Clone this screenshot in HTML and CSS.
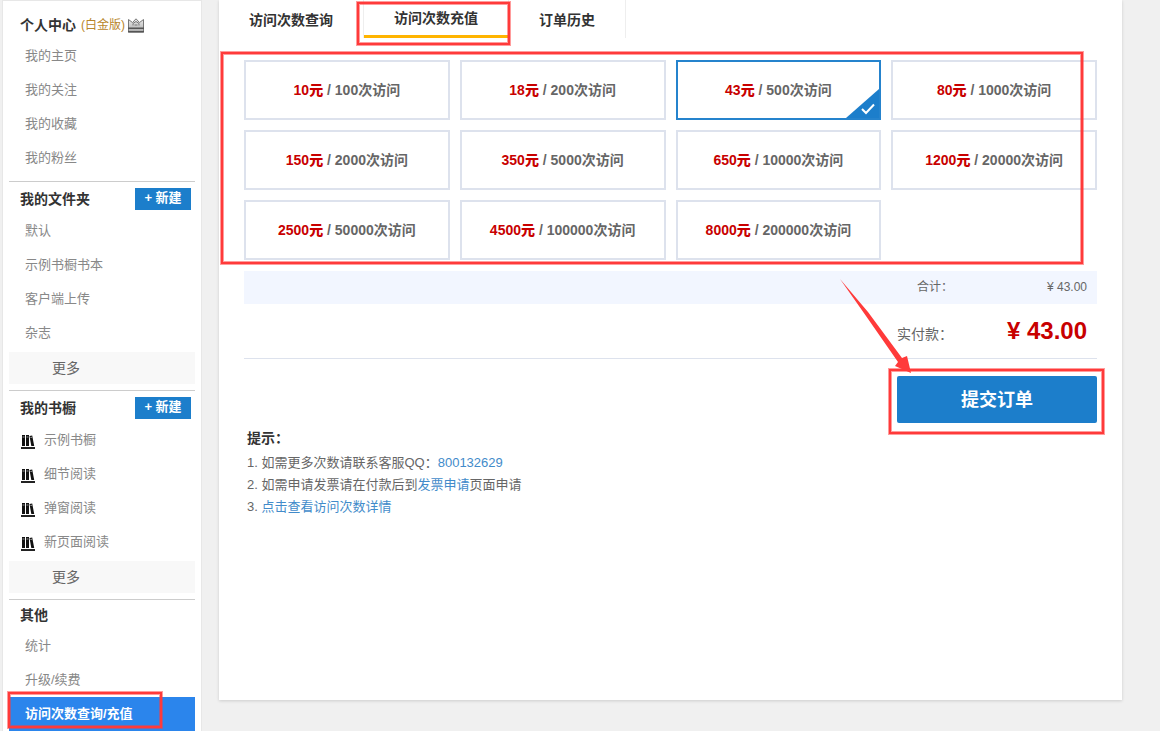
FILE: index.html
```html
<!DOCTYPE html>
<html lang="zh-CN">
<head>
<meta charset="utf-8">
<title>访问次数充值</title>
<link rel="stylesheet" href="styles.css">
</head>
<body>
<svg class="defs" aria-hidden="true">
  <symbol id="books" viewBox="0 0 14 14">
    <path fill="#111" d="M1 0h3v11H1zM5 0h3v11H5zM8.500 1l2.700-.6L13.200 11h-2.900z"/>
    <path fill="#999" d="M1.500 1.500h2v1h-2zM5.500 1.500h2v1h-2zM9.300 2l1.800-.3.200 1-1.800.3z"/>
    <path fill="#222" d="M0 12h14v2H0z"/>
  </symbol>
</svg>
<div class="page">
  <nav class="sidebar" aria-label="个人中心">
    <section class="group">
      <header class="group-head group-head-tall">
        <h2>个人中心</h2>
        <span class="plan">(白金版)</span>
        <svg class="crown" viewBox="0 0 16 15" aria-hidden="true">
          <defs><linearGradient id="silver" x1="0" y1="0" x2="0" y2="1"><stop offset="0" stop-color="#eee"/><stop offset="1" stop-color="#aaa"/></linearGradient></defs>
          <path d="M.5 1.500 4.500 4.500 8 .8l3.500 3.700 4-3V14H.5z" fill="url(#silver)" stroke="#777"/>
          <path d="M5 7.500V5.500L8 3.500l3 2v2M6.500 7h3" fill="none" stroke="#777"/>
          <path d="M0 9.500h16v1.500H0zM0 13h16v1.500H0z" fill="#555"/>
        </svg>
      </header>
      <ul>
        <li><a href="#">我的主页</a></li>
        <li><a href="#">我的关注</a></li>
        <li><a href="#">我的收藏</a></li>
        <li><a href="#">我的粉丝</a></li>
      </ul>
    </section>
    <section class="group">
      <header class="group-head">
        <h2>我的文件夹</h2>
        <button class="new" type="button">+ 新建</button>
      </header>
      <ul>
        <li><a href="#">默认</a></li>
        <li><a href="#">示例书橱书本</a></li>
        <li><a href="#">客户端上传</a></li>
        <li><a href="#">杂志</a></li>
      </ul>
      <a class="more" href="#">更多</a>
    </section>
    <section class="group">
      <header class="group-head">
        <h2>我的书橱</h2>
        <button class="new" type="button">+ 新建</button>
      </header>
      <ul class="shelves">
        <li><a href="#"><svg class="books"><use href="#books"/></svg>示例书橱</a></li>
        <li><a href="#"><svg class="books"><use href="#books"/></svg>细节阅读</a></li>
        <li><a href="#"><svg class="books"><use href="#books"/></svg>弹窗阅读</a></li>
        <li><a href="#"><svg class="books"><use href="#books"/></svg>新页面阅读</a></li>
      </ul>
      <a class="more" href="#">更多</a>
    </section>
    <section class="group">
      <header class="group-head group-head-short"><h2>其他</h2></header>
      <ul>
        <li><a href="#">统计</a></li>
        <li><a href="#">升级/续费</a></li>
        <li class="current"><a href="#" aria-current="page">访问次数查询/充值</a><span class="mark mark-nav"></span></li>
      </ul>
    </section>
  </nav>

  <main class="card">
    <nav class="tabs" aria-label="访问次数">
      <a class="tab" href="#">访问次数查询</a>
      <a class="tab tab-active" href="#" aria-current="page">访问次数充值<span class="mark mark-tab"></span></a>
      <a class="tab" href="#">订单历史</a>
    </nav>
    <form class="order">
      <div class="plans">
        <label class="option"><input type="radio" name="plan"><span><b>10元</b> / 100次访问</span></label>
        <label class="option"><input type="radio" name="plan"><span><b>18元</b> / 200次访问</span></label>
        <label class="option option-picked"><input type="radio" name="plan" checked><span><b>43元</b> / 500次访问</span>
          <svg class="tick" viewBox="0 0 33 29" aria-hidden="true"><path d="M33 0v29H0z" fill="#1c7ecb"/><path d="m16 20 4 4 8-8.500" fill="none" stroke="#fff" stroke-width="2"/></svg>
        </label>
        <label class="option"><input type="radio" name="plan"><span><b>80元</b> / 1000次访问</span></label>
        <label class="option"><input type="radio" name="plan"><span><b>150元</b> / 2000次访问</span></label>
        <label class="option"><input type="radio" name="plan"><span><b>350元</b> / 5000次访问</span></label>
        <label class="option"><input type="radio" name="plan"><span><b>650元</b> / 10000次访问</span></label>
        <label class="option"><input type="radio" name="plan"><span><b>1200元</b> / 20000次访问</span></label>
        <label class="option"><input type="radio" name="plan"><span><b>2500元</b> / 50000次访问</span></label>
        <label class="option"><input type="radio" name="plan"><span><b>4500元</b> / 100000次访问</span></label>
        <label class="option"><input type="radio" name="plan"><span><b>8000元</b> / 200000次访问</span></label>
        <span class="mark mark-plans"></span>
      </div>
      <div class="subtotal"><span>合计：</span><span class="amount">¥ 43.00</span></div>
      <div class="due"><span>实付款：</span><strong class="amount">¥ 43.00</strong></div>
      <div class="submit-row">
        <div class="submit-box">
          <button class="submit" type="submit">提交订单</button>
          <span class="mark mark-submit"></span>
          <svg class="arrow" viewBox="0 0 72 95" aria-hidden="true"><path d="M0 0 28 33 62 79l5-2 4 17-16-7 3-4L26 37z" fill="#ff3a3a"/></svg>
        </div>
      </div>
    </form>
    <section class="tips">
      <h3>提示：</h3>
      <ol>
        <li>如需更多次数请联系客服QQ：<a href="#">800132629</a></li>
        <li>如需申请发票请在付款后到<a href="#">发票申请</a>页面申请</li>
        <li><a href="#">点击查看访问次数详情</a></li>
      </ol>
    </section>
  </main>
</div>
</body>
</html>
```
FILE: styles.css
```css
* { box-sizing: border-box; }
html { background: #f0f0f0; }
body {
  margin: 0;
  color: #666;
  font: 13px/22px "Liberation Sans", "Noto Sans CJK SC", sans-serif;
}
h2, h3, ul, ol { margin: 0; padding: 0; }
ul, ol { list-style: none; }
a { color: inherit; text-decoration: none; }
button { border: 0; font-family: inherit; cursor: pointer; }
.defs { position: absolute; width: 0; height: 0; }

.page {
  display: flex;
  align-items: flex-start;
  gap: 17px;
  padding: 0 38px 0 2px;
}

/* Sidebar */
.sidebar {
  flex: none;
  width: 200px;
  padding: 0 6px;
  background: #fff;
  border: 1px solid #e7e7e7;
  border-bottom: 0;
}
.group + .group { margin-top: 6px; border-top: 1px solid #ccc; }
.group-head {
  display: flex;
  align-items: flex-start;
  height: 32px;
  padding: 6px 4px 0 11px;
}
.group-head h2 { color: #333; font-size: 14px; line-height: 22px; }
.group-head-tall { height: 38px; padding-top: 13px; }
.group-head-short { height: 29px; padding-top: 4px; }
.plan { margin-left: 5px; color: #b8862b; font-size: 12px; }
.crown { width: 16px; height: 15px; margin: 4px 0 0 3px; }
.new {
  width: 56px;
  height: 22px;
  margin-left: auto;
  padding: 0 0 2px;
  background: #1c7ecb;
  color: #fff;
  font-size: 13px;
  font-weight: 700;
  line-height: 20px;
}
.group li { position: relative; }
.group li a {
  display: flex;
  align-items: center;
  height: 34px;
  padding-left: 16px;
  color: #888;
}
.group .shelves a { padding-left: 12px; gap: 9px; }
.books { width: 14px; height: 14px; margin-top: 4px; }
.more {
  display: block;
  margin-top: 2px;
  padding-left: 43px;
  background: #f8f8f8;
  font-size: 14px;
  line-height: 32px;
}
.group .current a { background: #2b85ec; color: #fff; font-weight: 700; }

/* Main card */
.card {
  flex: 1;
  min-width: 0;
  padding-bottom: 182px;
  background: #fff;
  box-shadow: 0 1px 3px rgba(0, 0, 0, .15);
}
.tabs { display: flex; height: 38px; }
.tab {
  position: relative;
  padding: 0 30px;
  border-right: 1px solid #eee;
  color: #333;
  font-size: 14px;
  font-weight: 700;
  line-height: 40px;
}
.tab-active { border-bottom: 3px solid #ffb400; line-height: 36px; }
.order { padding: 22px 25px 0; }
.plans {
  position: relative;
  display: grid;
  grid-template-columns: repeat(4, 1fr);
  gap: 10px;
}
.option {
  position: relative;
  display: flex;
  align-items: center;
  justify-content: center;
  height: 60px;
  border: 2px solid #dde2ed;
  font-size: 14px;
  font-weight: 700;
}
.option input { position: absolute; opacity: 0; margin: 0; }
.option b { color: #c80000; }
.option-picked { border-color: #2583cd; }
.tick { position: absolute; right: 0; bottom: 0; width: 33px; height: 29px; }
.subtotal, .due { display: flex; justify-content: flex-end; padding-right: 10px; }
.amount { width: 134px; text-align: right; }
.subtotal {
  margin-top: 11px;
  background: #f2f6ff;
  font-size: 12px;
  line-height: 33px;
}
.due {
  align-items: center;
  height: 55px;
  border-bottom: 1px solid #dde2ed;
  font-size: 14px;
}
.due span { padding-top: 6px; }
.due .amount { color: #c80000; font-size: 24px; }
.submit-row { display: flex; justify-content: flex-end; margin-top: 17px; }
.submit-box { position: relative; width: 200px; }
.submit {
  display: block;
  width: 100%;
  height: 47px;
  padding: 0 0 4px;
  border-radius: 2px;
  background: #1c7ecb;
  color: #fff;
  font-size: 18px;
  font-weight: 700;
}
.tips { padding: 4px 28px 0; }
.tips h3 { color: #333; font-size: 14px; line-height: 22px; margin-bottom: 3px; }
.tips ol { counter-reset: tip; }
.tips li { counter-increment: tip; }
.tips li::before { content: counter(tip) ". "; }
.tips a { color: #428bca; }

/* Red callouts laid over the page */
.mark {
  position: absolute;
  z-index: 2;
  border: 2px solid #ff3a3a;
  box-shadow: 0 0 0 1px rgba(255, 58, 58, .5), inset 0 0 0 1px rgba(255, 58, 58, .5);
  pointer-events: none;
}
.mark-tab { inset: 2px -2px -10px -7px; }
.mark-plans { inset: -8px 14px -4px -23px; }
.mark-submit { inset: -7px -7px -11px -8px; }
.mark-nav { inset: -5px 33px 3px -1px; }
.arrow { position: absolute; z-index: 3; top: -97px; left: -57px; width: 72px; height: 95px; }
```
